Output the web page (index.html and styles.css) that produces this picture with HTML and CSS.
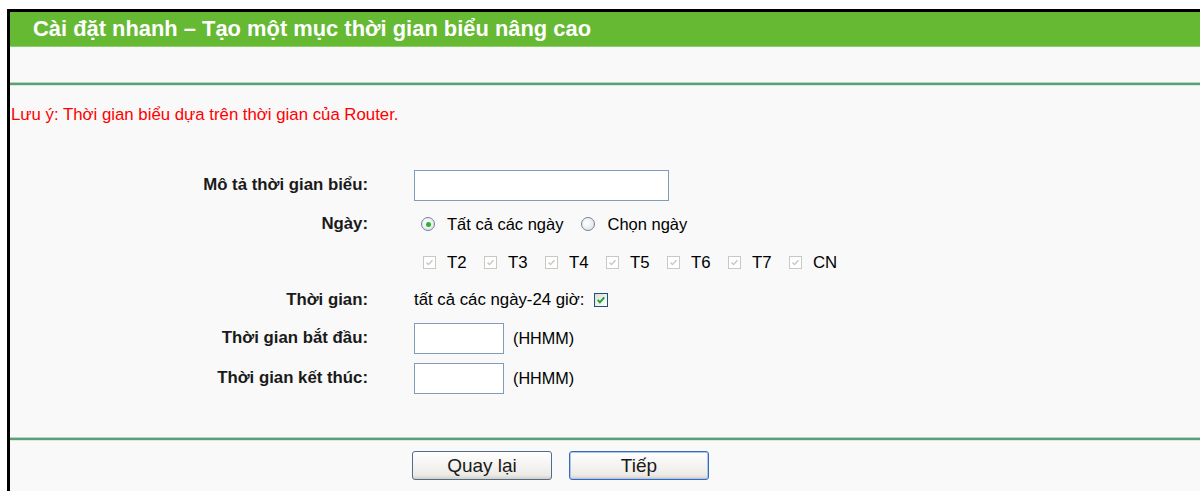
FILE: index.html
```html
<!DOCTYPE html>
<html lang="vi">
<head>
<meta charset="utf-8">
<title>Cài đặt nhanh</title>
<link rel="stylesheet" href="styles.css">
</head>
<body>
<div class="frame">
  <div class="title">Cài đặt nhanh – Tạo một mục thời gian biểu nâng cao</div>
  <div class="spacer"></div>
  <div class="rule"></div>
  <p class="note">Lưu ý: Thời gian biểu dựa trên thời gian của Router.</p>

  <div class="form">
    <div class="row r1">
      <label class="lbl">Mô tả thời gian biểu:</label>
      <div class="val"><span class="input wide"></span></div>
    </div>
    <div class="row r2">
      <label class="lbl">Ngày:</label>
      <div class="val">
        <span class="radio on"></span><span class="opt">Tất cả các ngày</span>
        <span class="radio"></span><span class="opt">Chọn ngày</span>
      </div>
    </div>
    <div class="row r3">
      <span class="lbl"></span>
      <div class="val days">
        <span class="day"><span class="cb off"><svg viewBox="0 0 13 13"><path d="M3 6.5 L5.3 9 L10 3.8" fill="none" stroke="#c4c4c4" stroke-width="1.6"/></svg></span>T2</span>
        <span class="day"><span class="cb off"><svg viewBox="0 0 13 13"><path d="M3 6.5 L5.3 9 L10 3.8" fill="none" stroke="#c4c4c4" stroke-width="1.6"/></svg></span>T3</span>
        <span class="day"><span class="cb off"><svg viewBox="0 0 13 13"><path d="M3 6.5 L5.3 9 L10 3.8" fill="none" stroke="#c4c4c4" stroke-width="1.6"/></svg></span>T4</span>
        <span class="day"><span class="cb off"><svg viewBox="0 0 13 13"><path d="M3 6.5 L5.3 9 L10 3.8" fill="none" stroke="#c4c4c4" stroke-width="1.6"/></svg></span>T5</span>
        <span class="day"><span class="cb off"><svg viewBox="0 0 13 13"><path d="M3 6.5 L5.3 9 L10 3.8" fill="none" stroke="#c4c4c4" stroke-width="1.6"/></svg></span>T6</span>
        <span class="day"><span class="cb off"><svg viewBox="0 0 13 13"><path d="M3 6.5 L5.3 9 L10 3.8" fill="none" stroke="#c4c4c4" stroke-width="1.6"/></svg></span>T7</span>
        <span class="day"><span class="cb off"><svg viewBox="0 0 13 13"><path d="M3 6.5 L5.3 9 L10 3.8" fill="none" stroke="#c4c4c4" stroke-width="1.6"/></svg></span>CN</span>
      </div>
    </div>
    <div class="row r4">
      <label class="lbl">Thời gian:</label>
      <div class="val"><span class="plain">tất cả các ngày-24 giờ:</span><span class="cb on"><svg viewBox="0 0 13 13"><path d="M3 6.3 L5.3 9 L10 3.6" fill="none" stroke="#21a121" stroke-width="2"/></svg></span></div>
    </div>
    <div class="row r5">
      <label class="lbl">Thời gian bắt đầu:</label>
      <div class="val"><span class="input short"></span><span class="unit">(HHMM)</span></div>
    </div>
    <div class="row r6">
      <label class="lbl">Thời gian kết thúc:</label>
      <div class="val"><span class="input short"></span><span class="unit">(HHMM)</span></div>
    </div>
  </div>

  <div class="gap"></div>
  <div class="rule"></div>
  <div class="buttons">
    <button class="btn">Quay lại</button>
    <button class="btn def">Tiếp</button>
  </div>
</div>
</body>
</html>
```

FILE: styles.css
```css
html, body {
  margin: 0;
  padding: 0;
  background: #ffffff;
  overflow: hidden;
}

.frame {
  margin: 9px 0 0 7px;
  border-top: 3px solid #000;
  border-left: 3px solid #000;
  background: #f9f9f9;
  height: calc(100vh - 12px);
  overflow: hidden;
  font-family: "Liberation Sans", Arial, sans-serif;
  font-size: 16.8px;
  color: #000;
}

.title {
  height: 34px;
  background: #66b933;
  color: #ffffff;
  font-weight: bold;
  font-size: 21.9px;
  line-height: 34px;
  padding-left: 23px;
  border-bottom: 1px solid #8fcb6e;
}

.spacer {
  height: 35px;
}

.rule {
  height: 2px;
  background: #5b9e78;
  border-top: 1px solid #b9d6c4;
  border-bottom: 1px solid #dbe9df;
}

.note {
  margin: 0;
  padding: 19px 0 0 1px;
  height: 60px;
  color: #ff0000;
  line-height: 20px;
}

.form {
  display: flex;
  flex-direction: column;
}

.row {
  display: grid;
  grid-template-columns: 358px 1fr;
  column-gap: 46px;
  align-items: center;
}

.r1 { height: 40px; }
.r2 { height: 38px; }
.r3 { height: 39px; }
.r4 { height: 36px; }
.r5 { height: 40px; }
.r6 { height: 40px; }

.lbl {
  text-align: right;
  font-weight: bold;
  color: #1a1a1a;
}

.val {
  display: flex;
  align-items: center;
  white-space: nowrap;
}

.input {
  display: inline-block;
  background: #fff;
  border: 1px solid #7f9db9;
  box-sizing: border-box;
}

.input.wide { width: 255px; height: 31px; }
.input.short { width: 90px; height: 31px; }

.unit {
  margin-left: 9px;
  font-size: 16.2px;
}

.radio {
  flex: none;
  width: 14px;
  height: 14px;
  border-radius: 50%;
  border: 1px solid #6f8397;
  box-sizing: border-box;
  background: radial-gradient(circle at 40% 40%, #ffffff, #d8dee6);
  margin-left: 7px;
  position: relative;
}

.radio.on::after {
  content: "";
  position: absolute;
  left: 3.5px;
  top: 3.5px;
  width: 5px;
  height: 5px;
  border-radius: 50%;
  background: #2bb52b;
}

.opt {
  margin-left: 12px;
  margin-right: 11px;
  font-size: 16.5px;
}

.day {
  display: inline-flex;
  align-items: center;
  width: 61px;
}

.cb {
  flex: none;
  display: inline-block;
  width: 13px;
  height: 13px;
  box-sizing: border-box;
  background: #fff;
}

.cb svg {
  display: block;
  width: 11px;
  height: 11px;
}

.cb.off {
  border: 1px solid #c9c9c3;
  margin-left: 9px;
  margin-right: 11px;
}

.cb.on {
  width: 14px;
  height: 14px;
  border: 1px solid #1c5180;
  margin-left: 9px;
  background: linear-gradient(135deg, #dcdcd7, #ffffff);
}

.cb.on svg {
  width: 12px;
  height: 12px;
}

.gap {
  height: 39px;
}

.buttons {
  display: flex;
  justify-content: flex-start;
  gap: 17px;
  padding: 10px 0 0 402px;
}

.btn {
  width: 140px;
  height: 29px;
  font-family: "Liberation Sans", Arial, sans-serif;
  font-size: 19px;
  color: #1a1a1a;
  border: 1px solid #4f6d8f;
  border-radius: 3px;
  background: linear-gradient(#ffffff, #ecebe6 85%, #d6d0c5);
  padding: 0;
}

.btn.def {
  border-color: #3c69b5;
  box-shadow: inset 0 0 0 1px #a9c7f0;
}
```
